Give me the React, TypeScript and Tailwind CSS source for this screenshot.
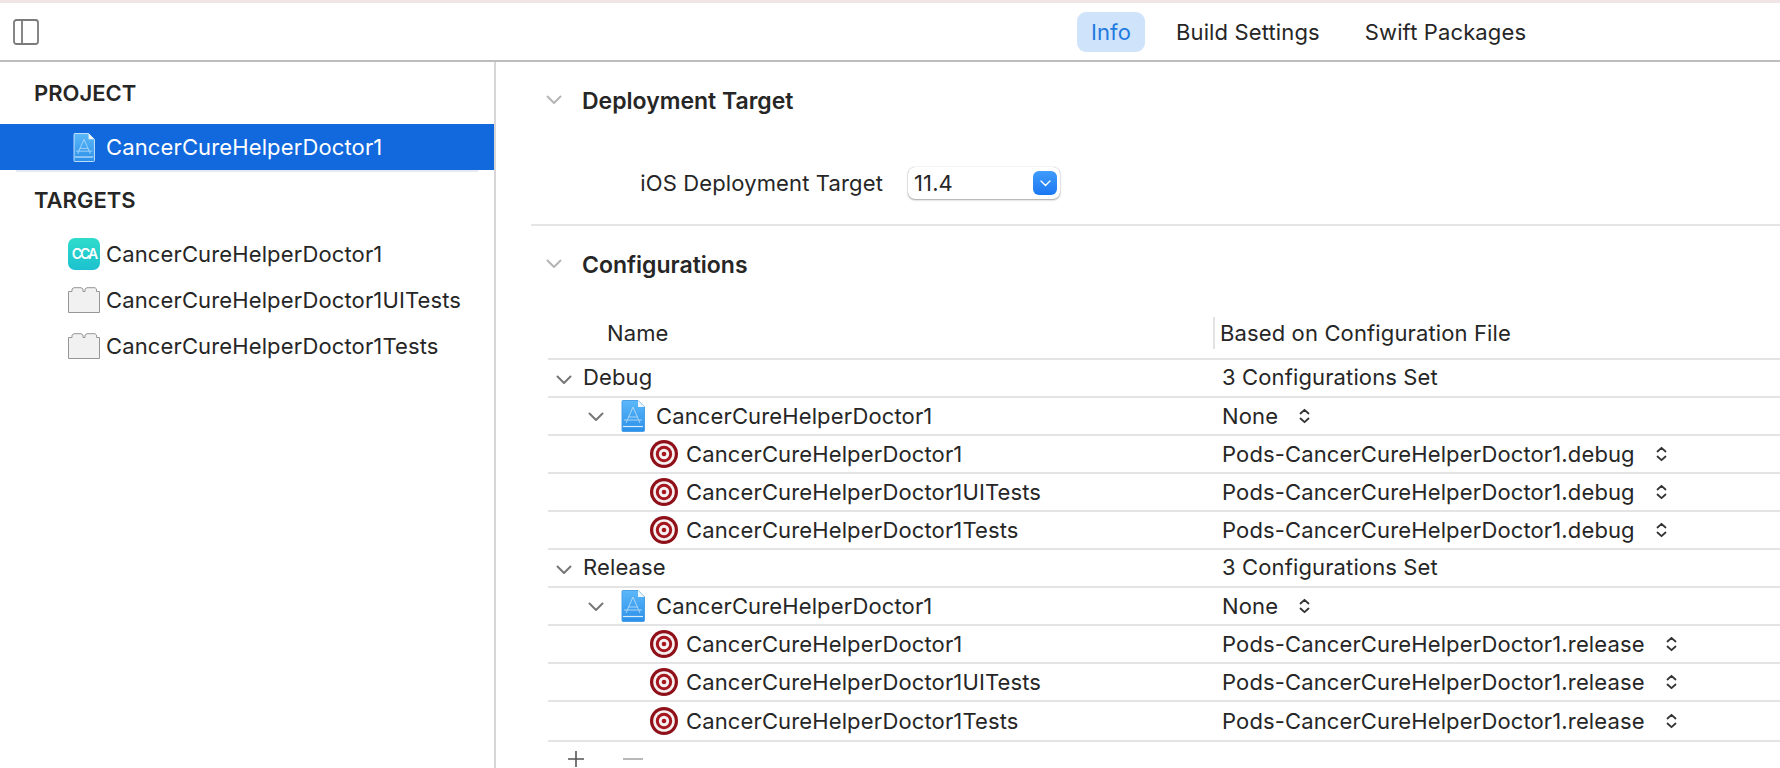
const FONT = "font-['Inter','Liberation_Sans',sans-serif]";

const targets = ["CancerCureHelperDoctor1", "CancerCureHelperDoctor1UITests", "CancerCureHelperDoctor1Tests"];

const groups = [
  { name: "Debug", suffix: "debug" },
  { name: "Release", suffix: "release" },
];

function Chevron({ className }: { className: string }) {
  return (
    <svg viewBox="0 0 16 10" className={className} fill="none" stroke="currentColor" strokeWidth="2" strokeLinecap="round" strokeLinejoin="round">
      <path d="M1.5 1.5 8 8l6.5-6.5" />
    </svg>
  );
}

function UpDown() {
  return (
    <svg viewBox="0 0 11 16" className="h-[16px] w-[11px] shrink-0 text-[#333]" fill="none" stroke="currentColor" strokeWidth="1.8" strokeLinecap="round" strokeLinejoin="round">
      <path d="M1.5 5.5 5.500 1.800l4 3.700M1.500 10.500l4 3.700 4-3.700" />
    </svg>
  );
}

function ProjectIcon({ className, selected }: { className: string; selected?: boolean }) {
  const id = selected ? "docSel" : "doc";
  return (
    <svg viewBox="0 0 24 32" className={className}>
      <defs>
        <linearGradient id={id} x1="0" y1="0" x2="0" y2="1">
          <stop offset="0" stopColor="#5cb8f9" />
          <stop offset="1" stopColor="#2b90ea" />
        </linearGradient>
      </defs>
      <path d="M1 1.500Q1 .5 2 .5h15l6.500 6.500v23.500q0 1-1 1H2q-1 0-1-1z" fill={`url(#${id})`} stroke={selected ? "#d5ebfb" : "#4a9fe6"} strokeWidth="1" />
      <path d="M17 .5V7h6.500z" fill="#eef5fb" />
      <g fill="none" stroke="#a9d6f8" strokeWidth="1">
        <path d="M12 7 5 23M12 7l7 16M7 17h10M3 20h18" />
        <path d="M2 26.500h20" stroke="#d7ecfb" strokeWidth="1.200" />
      </g>
    </svg>
  );
}

function TargetIcon() {
  return (
    <svg viewBox="0 0 28 28" className="h-[28px] w-[28px] shrink-0">
      <circle cx="14" cy="14" r="14" fill="#8f1019" />
      <circle cx="14" cy="14" r="10.800" fill="#f6f0f0" />
      <circle cx="14" cy="14" r="8.200" fill="#a5161f" />
      <circle cx="14" cy="14" r="5.200" fill="#f6f0f0" />
      <circle cx="14" cy="14" r="2.300" fill="#a5161f" />
    </svg>
  );
}

function BundleIcon() {
  return (
    <svg viewBox="0 0 32 26" className="h-[26px] w-[32px] shrink-0">
      <path d="M.5 4.500V25.500h31V4.500h-3V2L27 .7H19L17 2v2.500h-2V2L13 .7H6L4 2v2.500z" fill="#f1f1f1" stroke="#969696" strokeWidth="1" strokeLinejoin="round" />
    </svg>
  );
}

function Row({ left, right, tall }: { left: React.ReactNode; right: React.ReactNode; tall?: boolean }) {
  return (
    <div className={`flex items-center border-b-2 border-[#e4e4e4] ${tall ? "h-[40px]" : "h-[38px]"}`}>
      <div className="flex w-[673px] shrink-0 items-center">{left}</div>
      <div className="flex items-center pl-px">{right}</div>
    </div>
  );
}

function Group({ name, suffix, last }: { name: string; suffix: string; last?: boolean }) {
  return (
    <>
      <Row
        left={
          <>
            <Chevron className="ml-[8px] mt-[3px] h-[10px] w-[16px] shrink-0 text-[#777]" />
            <span className="mb-[2px] ml-[11px]">{name}</span>
          </>
        }
        right={<span className="mb-[2px]">3 Configurations Set</span>}
      />
      <Row
        left={
          <>
            <Chevron className="ml-[40px] mt-[2px] h-[10px] w-[16px] shrink-0 text-[#777]" />
            <ProjectIcon className="ml-[17px] h-[32px] w-[24px] shrink-0" />
            <span className="ml-[11px]">{targets[0]}</span>
          </>
        }
        right={
          <>
            <span>None</span>
            <span className="ml-[21px]">
              <UpDown />
            </span>
          </>
        }
      />
      {targets.map((t, i) => (
        <Row
          key={t}
          tall={last && i === targets.length - 1}
          left={
            <>
              <span className="ml-[102px]">
                <TargetIcon />
              </span>
              <span className="ml-[8px]">{t}</span>
            </>
          }
          right={
            <>
              <span>Pods-CancerCureHelperDoctor1.{suffix}</span>
              <span className="ml-[21px]">
                <UpDown />
              </span>
            </>
          }
        />
      ))}
    </>
  );
}

export default function App() {
  return (
    <div className={`${FONT} flex h-[768px] w-[1780px] flex-col overflow-hidden bg-white text-[22px] leading-none tracking-[0.13px] text-[#262626]`}>
      <div className="h-[3px] bg-[#f1e5e7]" />
      <div className="flex h-[59px] shrink-0 items-center border-b-2 border-[#bdbdbd] pl-[13px]">
        <svg viewBox="0 0 26 26" className="h-[26px] w-[26px] shrink-0" fill="none" stroke="#7b7b7b" strokeWidth="1.800">
          <rect x="1" y="1" width="24" height="24" rx="2.500" />
          <path d="M9 1v24" />
        </svg>
        <div className="ml-[1038px] flex items-center">
          <div className="flex h-[40px] w-[68px] items-center justify-center rounded-[9px] bg-[#cfe4fb] text-[#1f7ae0]">Info</div>
          <div className="ml-[31px]">Build Settings</div>
          <div className="ml-[45px]">Swift Packages</div>
        </div>
      </div>
      <div className="flex min-h-0 flex-1">
        <aside className="w-[496px] shrink-0 border-r-2 border-[#d8d6d8]">
          <div className="flex h-[62px] items-center pl-[34px] font-semibold tracking-normal">PROJECT</div>
          <div className="flex h-[46px] items-center bg-[#1268dd] pl-[73px] text-white">
            <ProjectIcon className="h-[29px] w-[22px] shrink-0" selected />
            <span className="ml-[11px]">{targets[0]}</span>
          </div>
          <div className="mx-[16px] h-[2px] bg-[#e6ebf2]" />
          <div className="flex h-[59px] items-center pb-[3px] pl-[34px] font-semibold tracking-normal">TARGETS</div>
          <div className="flex h-[46px] items-center pl-[68px]">
            <div className="flex h-[32px] w-[32px] shrink-0 items-center justify-center rounded-[7px] bg-gradient-to-b from-[#2fdccb] to-[#1cc1cf] text-[14px] font-semibold tracking-[-2px] text-white">CCA</div>
            <span className="ml-[6px]">{targets[0]}</span>
          </div>
          {targets.slice(1).map((t) => (
            <div key={t} className="flex h-[46px] items-center pl-[68px]">
              <BundleIcon />
              <span className="ml-[6px]">{t}</span>
            </div>
          ))}
        </aside>
        <main className="min-w-0 flex-1">
          <div className="ml-[35px] flex h-[78px] items-center">
            <Chevron className="ml-[15px] mt-[-2px] h-[10px] w-[16px] shrink-0 text-[#b5b5b5]" />
            <h2 className="ml-[20px] text-[23px] font-semibold tracking-normal">Deployment Target</h2>
          </div>
          <div className="ml-[35px] flex h-[86px] items-start border-b-2 border-[#e5e5e5] pt-[27px]">
            <span className="ml-[110px] flex h-[32px] w-[242px] items-center justify-end whitespace-nowrap">iOS Deployment Target</span>
            <div className="ml-[25px] flex h-[32px] w-[152px] items-center justify-between rounded-[7px] bg-white pl-[6px] pr-[3px] shadow-[0_1px_2px_rgba(0,0,0,0.35),0_0_1px_rgba(0,0,0,0.3)]">
              <span>11.4</span>
              <span className="flex h-[24px] w-[24px] items-center justify-center rounded-[6px] bg-gradient-to-b from-[#3f9bfb] to-[#1b78f2]">
                <Chevron className="h-[7px] w-[11px] text-white" />
              </span>
            </div>
          </div>
          <div className="ml-[35px] flex h-[76px] items-center pt-[2px]">
            <Chevron className="ml-[15px] mt-[-2px] h-[10px] w-[16px] shrink-0 text-[#b5b5b5]" />
            <h2 className="ml-[20px] text-[23px] font-semibold tracking-normal">Configurations</h2>
          </div>
          <div className="ml-[52px]">
            <div className="flex h-[58px] items-center border-b-2 border-[#e4e4e4] pt-[5px]">
              <span className="ml-[59px] w-[606px] shrink-0">Name</span>
              <span className="flex h-[32px] items-center border-l-2 border-[#e2e2e2] pl-[5px]">Based on Configuration File</span>
            </div>
            {groups.map((g, i) => (
              <Group key={g.name} name={g.name} suffix={g.suffix} last={i === groups.length - 1} />
            ))}
            <div className="flex h-[26px] items-center pt-[8px]">
              <svg viewBox="0 0 20 20" className="ml-[18px] h-[20px] w-[20px] shrink-0" fill="none" stroke="#555" strokeWidth="1.600">
                <path d="M10 2v16M2 10h16" />
              </svg>
              <svg viewBox="0 0 22 4" className="ml-[36px] h-[4px] w-[22px] shrink-0" fill="none" stroke="#a8a8a8" strokeWidth="1.600">
                <path d="M1 2h20" />
              </svg>
            </div>
          </div>
        </main>
      </div>
    </div>
  );
}
